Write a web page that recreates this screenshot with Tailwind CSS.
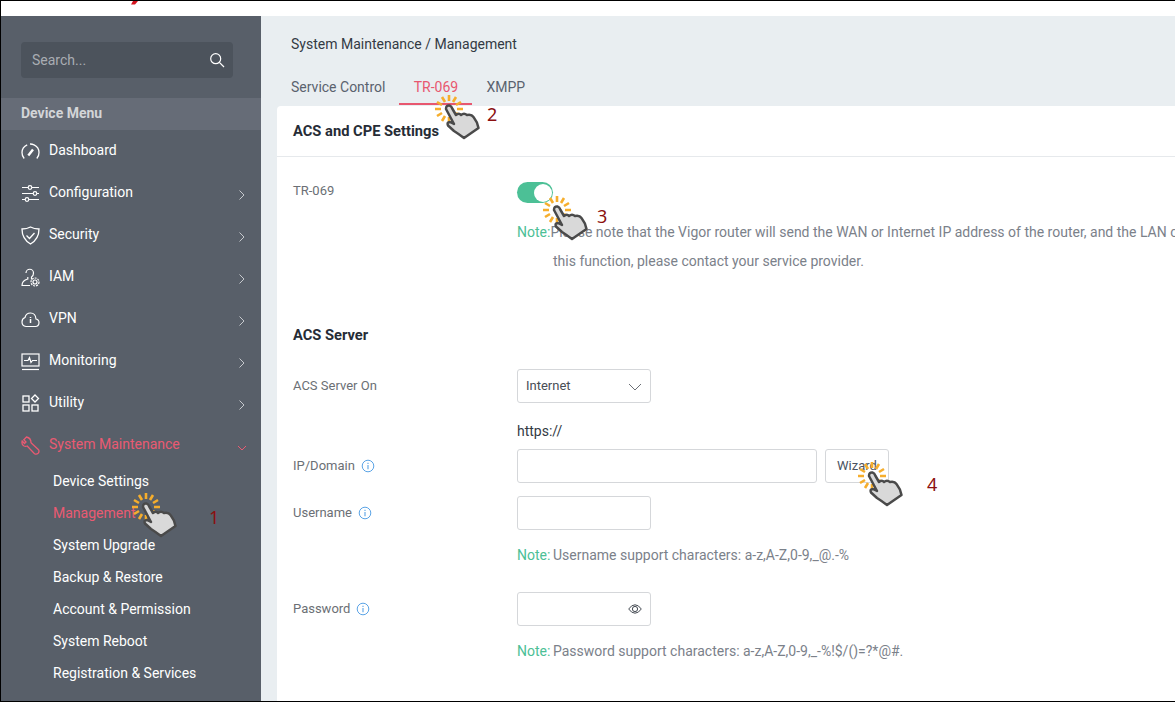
<!DOCTYPE html>
<html lang="en">
<head>
    <meta charset="UTF-8">
    <meta name="viewport" content="width=device-width, initial-scale=1.0">
    <title>System Maintenance / Management</title>
    <script src="https://cdn.jsdelivr.net/npm/@tailwindcss/browser@4"></script>
</head>
<body class="bg-white font-['Roboto',sans-serif]">
    <svg class="hidden">
        <symbol id="hand" viewBox="0 0 48 48">
            <g stroke="#f6ae2d" stroke-width="2.6" stroke-linecap="butt">
                <path d="M23 15H29M22 19L27 22M19 22L22 27M15 23V29M11 22L8 27M8 19L3 22M7 15H1M8 11L3 8M11 8L8 3M15 7V1M19 8L22 3M22 11L27 8"/>
            </g>
            <path d="M12 15Q12 11 15.5 11.5Q17.5 12 18.5 15L22 21Q25 18.5 27 21Q30 18.5 33 21Q37.5 20 39.5 23Q43.5 28 44.5 34L30 44Q24 39.5 20 37L14 31.5Q12.5 28 16 28L20 30Z" fill="#d9d9d9" stroke="#4a4a4a" stroke-width="2.5" stroke-linejoin="round"/>
        </symbol>
        <symbol id="chev" viewBox="0 0 8 12"><path d="M1.5 1.5L6 6L1.5 10.5" fill="none" stroke="currentColor" stroke-width="1"/></symbol>
        <symbol id="info" viewBox="0 0 14 14">
            <circle cx="7" cy="7" r="5.8" fill="none" stroke="#5ba4e6" stroke-width="1"/>
            <path d="M7 6V10.2M7 3.8V4.9" stroke="#5ba4e6" stroke-width="1.1"/>
        </symbol>
    </svg>

    <div class="relative w-[1175px] h-[702px] overflow-hidden flex flex-col border-l border-t border-b border-black">
        <!-- top bar, only the tail of the logo shows -->
        <div class="relative h-[15px] shrink-0 bg-white">
            <svg class="absolute left-[128px] top-0" width="10" height="4"><path d="M2 3.5H6L9 0H4Z" fill="#d5121f"/></svg>
        </div>

        <div class="flex flex-1 min-h-0">
            <!-- sidebar -->
            <aside class="w-[260px] shrink-0 bg-[#585f69] text-[14px] text-white">
                <div class="px-5 pt-[26px] pb-5">
                    <div class="flex items-center justify-between h-9 w-[212px] pl-[11px] pr-2 rounded bg-[#4c535c]">
                        <span class="text-[#a9adb3]">Search...</span>
                        <svg width="16" height="16" viewBox="0 0 16 16" fill="none" stroke="#fff" stroke-width="1.2"><circle cx="6.7" cy="6.7" r="5"/><path d="M10.4 10.4L15 15"/></svg>
                    </div>
                </div>
                <div class="h-8 flex items-center px-5 bg-[#666c77] font-bold text-[#d3d5d8]"><span class="-translate-y-px">Device Menu</span></div>

                <ul>
                    <li class="h-[42px] flex items-center pl-5 pr-[15px]">
                        <svg class="w-[19px] h-[19px] mt-[1px]" viewBox="0 0 19 19" fill="none" stroke="#fff" stroke-width="1.3"><path d="M3.2 16.5A8.5 8.5 0 0 1 1 10.5A8.5 8.5 0 0 1 6.2 2.8M9 2Q11 1.9 13 2.8A8.5 8.5 0 0 1 18 10.5A8.5 8.5 0 0 1 15.8 16.5"/><path d="M7.3 13.5L12 7.5" stroke-width="2.4"/></svg>
                        <span class="ml-[9px] -translate-y-px">Dashboard</span>
                    </li>
                    <li class="h-[42px] flex items-center pl-5 pr-[15px]">
                        <svg class="w-[19px] h-[19px]" viewBox="0 0 19 19" fill="none" stroke="#fff" stroke-width="1.2"><path d="M1 3.5H7M11 3.5H18M1 9.5H12M16 9.5H18M1 15.5H4M8 15.5H18"/><circle cx="9" cy="3.5" r="1.8"/><circle cx="14" cy="9.5" r="1.8"/><circle cx="6" cy="15.5" r="1.8"/></svg>
                        <span class="ml-[9px] -translate-y-px">Configuration</span>
                        <svg class="ml-auto mt-1 w-2 h-3 text-[#c6c9cd]"><use href="#chev"/></svg>
                    </li>
                    <li class="h-[42px] flex items-center pl-5 pr-[15px]">
                        <svg class="w-[19px] h-[19px]" viewBox="0 0 19 19" fill="none" stroke="#fff" stroke-width="1.3"><path d="M9.5 1Q13 3 18 3Q18 13 9.5 18Q1 13 1 3Q6 3 9.5 1Z"/><path d="M5.5 9.5L8.5 12.5L13.5 7"/></svg>
                        <span class="ml-[9px] -translate-y-px">Security</span>
                        <svg class="ml-auto mt-1 w-2 h-3 text-[#c6c9cd]"><use href="#chev"/></svg>
                    </li>
                    <li class="h-[42px] flex items-center pl-5 pr-[15px]">
                        <svg class="w-[19px] h-[19px]" viewBox="0 0 19 19" fill="none" stroke="#fff" stroke-width="1.2"><path d="M5 5A3.7 3.7 0 0 1 12.5 5Q12.5 8 10.5 9V11.5M6.8 9V11Q1 12.5 1 17.5H9"/><circle cx="14" cy="14" r="2"/><circle cx="14" cy="14" r="4" stroke-dasharray="2 1"/></svg>
                        <span class="ml-[9px] -translate-y-px">IAM</span>
                        <svg class="ml-auto mt-1 w-2 h-3 text-[#c6c9cd]"><use href="#chev"/></svg>
                    </li>
                    <li class="h-[42px] flex items-center pl-5 pr-[15px]">
                        <svg class="w-[19px] h-[19px]" viewBox="0 0 19 19" fill="none" stroke="#fff" stroke-width="1.2"><path d="M5 16.5H14.5A3.8 3.8 0 0 0 15 9Q14.5 3 9.5 3Q5 3 4 7.5Q1 8.5 1 12Q1 16 5 16.5Z"/><path d="M9.5 9V13M9.5 7V8" stroke-width="1.5"/></svg>
                        <span class="ml-[9px] -translate-y-px">VPN</span>
                        <svg class="ml-auto mt-1 w-2 h-3 text-[#c6c9cd]"><use href="#chev"/></svg>
                    </li>
                    <li class="h-[42px] flex items-center pl-5 pr-[15px]">
                        <svg class="w-[19px] h-[19px]" viewBox="0 0 19 19" fill="none" stroke="#fff" stroke-width="1.2"><rect x="1" y="2" width="17" height="12"/><path d="M1 17.5H18"/><path d="M3 8.5H7L8.5 5.5L10 10.5L11.5 8.5H16"/></svg>
                        <span class="ml-[9px] -translate-y-px">Monitoring</span>
                        <svg class="ml-auto mt-1 w-2 h-3 text-[#c6c9cd]"><use href="#chev"/></svg>
                    </li>
                    <li class="h-[42px] flex items-center pl-5 pr-[15px]">
                        <svg class="w-[19px] h-[19px]" viewBox="0 0 19 19" fill="none" stroke="#fff" stroke-width="1.3"><rect x="2" y="2" width="6" height="6"/><rect x="2" y="11" width="6" height="6"/><rect x="11" y="11" width="6" height="6"/><path d="M14 1L17.5 4.5L14 8L10.5 4.5Z"/></svg>
                        <span class="ml-[9px] -translate-y-px">Utility</span>
                        <svg class="ml-auto mt-1 w-2 h-3 text-[#c6c9cd]"><use href="#chev"/></svg>
                    </li>
                    <li class="h-[42px] flex items-center pl-5 pr-[15px] text-[#ea5a72]">
                        <svg class="w-[19px] h-[19px]" viewBox="0 0 19 19" fill="none" stroke="#ea5a72" stroke-width="1.3"><path d="M5.5 1L2.8 3.7L5 6L3.5 7.5L1.2 5Q0.2 8.5 3 10Q4.5 10.7 6.2 10L13.5 17.7Q15.5 18.8 17.2 17.2Q18.6 15.4 17.5 13.7L10 6.6Q10 2 5.5 1Z"/></svg>
                        <span class="ml-[9px] -translate-y-px">System Maintenance</span>
                        <svg class="ml-auto mr-[-2px] mt-[6px] w-3 h-2" viewBox="0 0 12 8" fill="none" stroke="#ea5a72"><path d="M2 2L6 6L10 2"/></svg>
                    </li>
                </ul>

                <ul class="pl-[52px] mt-[-1px]">
                    <li class="h-8 leading-8">Device Settings</li>
                    <li class="h-8 leading-8 text-[#ea5a72]">Management</li>
                    <li class="h-8 leading-8">System Upgrade</li>
                    <li class="h-8 leading-8">Backup &amp; Restore</li>
                    <li class="h-8 leading-8">Account &amp; Permission</li>
                    <li class="h-8 leading-8">System Reboot</li>
                    <li class="h-8 leading-8">Registration &amp; Services</li>
                </ul>
            </aside>

            <!-- main -->
            <main class="flex-1 min-w-0 flex flex-col bg-[#e9eef1] text-[14px] overflow-hidden">
                <div class="pl-[30px] pt-[19px] leading-[18px] text-[#333a44]">System Maintenance / Management</div>
                <nav class="flex pl-[16px] mt-[17px] h-[36px] leading-[34px]">
                    <span class="px-[14px] text-[#5a626e]">Service Control</span>
                    <span class="w-[73px] h-[35px] text-center text-[#e8576f] border-b-2 border-[#e8576f]">TR-069</span>
                    <span class="px-[14px] text-[#5a626e]">XMPP</span>
                </nav>

                <section class="flex-1 ml-[16px] bg-white rounded-tl">
                    <h2 class="h-[51px] pl-4 pt-[1px] flex items-center border-b border-[#e6e9ec] text-[14.7px] font-bold text-[#262c36]">ACS and CPE Settings</h2>

                    <div class="pl-4 pt-[25px] whitespace-nowrap text-[13px] text-[#6b6f75]">
                        <div class="flex h-[21px]">
                            <div class="w-[224px] leading-[18px]">TR-069</div>
                            <div class="relative w-[36px] h-[21px] rounded-full bg-[#4cc096]">
                                <div class="absolute right-[1px] top-[1.5px] w-[18px] h-[18px] rounded-full bg-white"></div>
                            </div>
                        </div>

                        <div class="ml-[224px] mt-[15px] text-[14px] leading-[29px] text-[#7b818a]">
                            <div class="flex">
                                <span class="w-[36px] text-[#4cc096]">Note:</span>
                                <span>Please note that the Vigor router will send the WAN or Internet IP address of the router, and the LAN client information to the ACS server. If you want to use</span>
                            </div>
                            <div class="pl-[36px]">this function, please contact your service provider.</div>
                        </div>

                        <h3 class="mt-[50px] text-[14.7px] leading-[18px] font-bold text-[#262c36]">ACS Server</h3>

                        <div class="flex items-center mt-[25px] h-[34px]">
                            <div class="w-[224px]">ACS Server On</div>
                            <div class="flex items-center justify-between w-[134px] h-[34px] pl-[8px] pr-[8px] border border-[#d5d7da] rounded-[3px] text-[#484d55]">
                                <span>Internet</span>
                                <svg width="14" height="8" viewBox="0 0 14 8" fill="none" stroke="#6b6f75" class="mt-[2px]"><path d="M1 1L7 7L13 1"/></svg>
                            </div>
                        </div>

                        <div class="ml-[224px] mt-[18px] h-[28px] leading-[20px] text-[14px] text-[#333a44]">https://</div>

                        <div class="flex items-center h-[34px]">
                            <div class="flex items-center w-[224px]">IP/Domain<svg class="ml-[6px] w-[14px] h-[14px]"><use href="#info"/></svg></div>
                            <div class="w-[300px] h-[34px] border border-[#d5d7da] rounded-[3px]"></div>
                            <div class="ml-[8px] w-[64px] h-[34px] flex items-center justify-center border border-[#d5d7da] rounded-[3px] text-[#4b5360]">Wizard</div>
                        </div>

                        <div class="flex items-center mt-[13px] h-[34px]">
                            <div class="flex items-center w-[224px]">Username<svg class="ml-[6px] w-[14px] h-[14px]"><use href="#info"/></svg></div>
                            <div class="w-[134px] h-[34px] border border-[#d5d7da] rounded-[3px]"></div>
                        </div>

                        <div class="flex ml-[224px] mt-[15px] leading-[20px] text-[14px] text-[#7b818a]"><span class="w-[36px] text-[#4cc096]">Note:</span><span>Username support characters: a-z,A-Z,0-9,_@.-%</span></div>

                        <div class="flex items-center mt-[27px] h-[34px]">
                            <div class="flex items-center w-[224px]">Password<svg class="ml-[6px] w-[14px] h-[14px]"><use href="#info"/></svg></div>
                            <div class="flex items-center justify-end w-[134px] h-[34px] pr-[8px] border border-[#d5d7da] rounded-[3px]">
                                <svg width="14" height="10" viewBox="0 0 14 10" fill="none" stroke="#444a52"><path d="M0.7 5Q3.5 0.8 7 0.8Q10.5 0.8 13.3 5Q10.5 9.2 7 9.2Q3.5 9.2 0.7 5Z"/><circle cx="7" cy="5" r="2.6"/></svg>
                            </div>
                        </div>

                        <div class="flex ml-[224px] mt-[15px] leading-[20px] text-[14px] text-[#7b818a]"><span class="w-[36px] text-[#4cc096]">Note:</span><span>Password support characters: a-z,A-Z,0-9,_-%!$/()=?*@#.</span></div>
                    </div>
                </section>
            </main>
        </div>

        <!-- tutorial annotations drawn over the screenshot -->
        <svg class="absolute left-[130px] top-[491px] w-[48px] h-[48px]"><use href="#hand"/></svg>
        <span class="absolute left-[208px] top-[504px] text-[18px] leading-[24px] text-[#8b1010] font-['Noto_Sans',sans-serif]">1</span>
        <svg class="absolute left-[433px] top-[93px] w-[48px] h-[48px]"><use href="#hand"/></svg>
        <span class="absolute left-[486px] top-[101px] text-[18px] leading-[24px] text-[#8b1010] font-['Noto_Sans',sans-serif]">2</span>
        <svg class="absolute left-[541px] top-[194px] w-[48px] h-[48px]"><use href="#hand"/></svg>
        <span class="absolute left-[596px] top-[203px] text-[18px] leading-[24px] text-[#8b1010] font-['Noto_Sans',sans-serif]">3</span>
        <svg class="absolute left-[856px] top-[460px] w-[48px] h-[48px]"><use href="#hand"/></svg>
        <span class="absolute left-[926px] top-[471px] text-[18px] leading-[24px] text-[#8b1010] font-['Noto_Sans',sans-serif]">4</span>
    </div>
</body>
</html>
